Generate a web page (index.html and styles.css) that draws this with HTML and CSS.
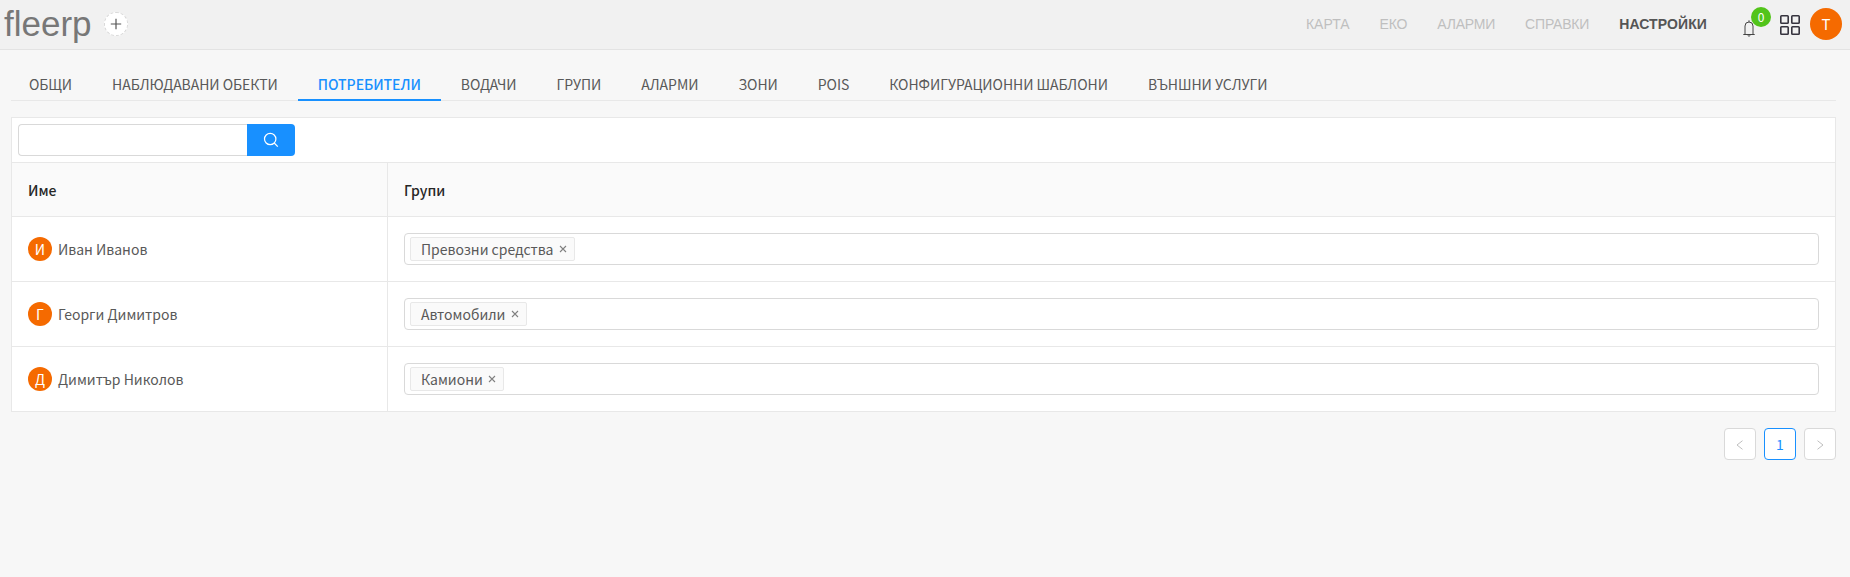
FILE: index.html
```html
<!DOCTYPE html>
<html lang="bg">
<head>
<meta charset="utf-8">
<title>fleerp</title>
<link rel="stylesheet" href="styles.css">
</head>
<body>
<header class="header">
  <div class="logo">fleerp</div>
  <button class="add" aria-label="+"><svg width="12" height="12" viewBox="0 0 12 12"><path d="M6 .8v10.400M.8 6h10.400" stroke="#555" stroke-width="1.200"/></svg></button>
  <nav class="nav">
    <a>КАРТА</a><a class="tight">ЕКО</a><a class="tight">АЛАРМИ</a><a class="tight">СПРАВКИ</a><a class="current">НАСТРОЙКИ</a>
  </nav>
  <div class="bell">
    <svg width="12" height="17" viewBox="0 0 12 17" fill="none" stroke="#444"><path d="M.3 14.500h11.400M2 14.500V6a4 4 0 0 1 8 0v8.500M6 .3V2M4.700 15.500q1.300 1.400 2.600 0"/></svg>
    <span class="badge">0</span>
  </div>
  <svg class="apps" width="20" height="20" viewBox="0 0 20 20" fill="none" stroke="#36343f" stroke-width="1.600"><rect x=".8" y=".8" width="7.400" height="7.400" rx=".8"/><rect x="11.800" y=".8" width="7.400" height="7.400" rx=".8"/><rect x=".8" y="11.800" width="7.400" height="7.400" rx=".8"/><rect x="11.800" y="11.800" width="7.400" height="7.400" rx=".8"/></svg>
  <div class="avatar large">T</div>
</header>
<main class="content">
  <div class="tabs">
    <a class="tab">ОБЩИ</a><a class="tab">НАБЛЮДАВАНИ ОБЕКТИ</a><a class="tab active">ПОТРЕБИТЕЛИ</a><a class="tab">ВОДАЧИ</a><a class="tab">ГРУПИ</a><a class="tab">АЛАРМИ</a><a class="tab">ЗОНИ</a><a class="tab">POIS</a><a class="tab">КОНФИГУРАЦИОННИ ШАБЛОНИ</a><a class="tab">ВЪНШНИ УСЛУГИ</a>
  </div>
  <section class="card">
    <div class="search">
      <input class="search-input" type="text">
      <button class="search-button" aria-label="search"><svg width="16" height="16" viewBox="0 0 16 16" fill="none" stroke="#fff" stroke-width="1.200"><circle cx="7.200" cy="7" r="5.700"/><path d="M11.200 11l3.600 3.700"/></svg></button>
    </div>
    <div class="row head"><div class="cell">Име</div><div class="cell">Групи</div></div>
    <div class="row"><div class="cell"><span class="avatar">И</span>Иван Иванов</div><div class="cell"><div class="select"><span class="tag">Превозни средства<svg class="close" viewBox="0 0 8 8"><path d="M1 1l6 6M7 1L1 7"/></svg></span></div></div></div>
    <div class="row"><div class="cell"><span class="avatar">Г</span>Георги Димитров</div><div class="cell"><div class="select"><span class="tag">Автомобили<svg class="close" viewBox="0 0 8 8"><path d="M1 1l6 6M7 1L1 7"/></svg></span></div></div></div>
    <div class="row"><div class="cell"><span class="avatar">Д</span>Димитър Николов</div><div class="cell"><div class="select"><span class="tag">Камиони<svg class="close" viewBox="0 0 8 8"><path d="M1 1l6 6M7 1L1 7"/></svg></span></div></div></div>
  </section>
  <div class="pagination">
    <a class="page"><svg width="8" height="10" viewBox="0 0 8 10"><path d="M6.500.7L1 5l5.500 4.300"/></svg></a>
    <a class="page selected">1</a>
    <a class="page"><svg width="8" height="10" viewBox="0 0 8 10"><path d="M1.500.7L7 5 1.500 9.300"/></svg></a>
  </div>
</main>
</body>
</html>
```
FILE: styles.css
```css
* { box-sizing: border-box; }
body {
  margin: 0;
  min-height: 577px;
  background: #f7f7f7;
  color: #595959;
  font: 14px/24px "Noto Sans CJK SC", "Noto Sans", sans-serif;
}
button { padding: 0; border: 0; }
.header {
  display: flex;
  height: 50px;
  padding-right: 8px;
  background: #f1f1f1;
  border-bottom: 1px solid #e3e3e3;
  font-family: "Liberation Sans", Arial, sans-serif;
}
.logo { width: 104px; padding-left: 4px; font-size: 35px; line-height: 48px; color: #777; }
.add {
  display: flex;
  align-items: center;
  justify-content: center;
  width: 24px;
  height: 24px;
  margin-top: 12px;
  background: #fff;
  border: 1px dashed #d9d9d9;
  border-radius: 50%;
}
.nav { display: flex; gap: 30px; margin-left: auto; font-size: 14px; line-height: 48px; color: #bfbfbf; }
.tight { letter-spacing: -.2px; }
.current { color: #555; font-weight: bold; letter-spacing: .1px; }
.bell { position: relative; width: 12px; height: 17px; margin: 20px 25px 0 36px; line-height: 0; }
.badge {
  position: absolute;
  left: 8px;
  top: -13px;
  width: 20px;
  height: 20px;
  border-radius: 10px;
  background: #52c41a;
  color: #fff;
  font: 12px/20px "Noto Sans CJK SC", sans-serif;
  text-align: center;
}
.apps { margin: 15px 10px 0 0; }
.avatar {
  flex: none;
  width: 24px;
  height: 24px;
  margin-right: 6px;
  border-radius: 50%;
  background: #f56a00;
  color: #fff;
  line-height: 24px;
  text-align: center;
}
.avatar.large { width: 32px; height: 32px; margin: 8px 0 0; line-height: 32px; font-size: 15px; font-family: "Noto Sans CJK SC", sans-serif; }
.content { padding: 19px 14px 0 11px; }
.tabs { display: flex; height: 32px; margin-bottom: 16px; border-bottom: 1px solid #e8e8e8; }
.tab { height: 32px; padding: 3px 20px 0; white-space: nowrap; letter-spacing: -.05px; }
.tab:first-child { padding-left: 18px; }
.active { color: #1890ff; font-weight: 500; border-bottom: 2px solid #1890ff; }
.card { background: #fff; border: 1px solid #e8e8e8; border-bottom: 0; }
.search { display: flex; height: 45px; padding: 6px; border-bottom: 1px solid #e8e8e8; }
.search-input { width: 229px; height: 32px; border: 1px solid #d9d9d9; border-right: 0; border-radius: 4px 0 0 4px; background: #fff; }
.search-button { display: flex; align-items: center; justify-content: center; width: 48px; height: 32px; background: #1890ff; border-radius: 0 4px 4px 0; }
.row { display: grid; grid-template-columns: 376px 1fr; height: 65px; border-bottom: 1px solid #e8e8e8; }
.cell { display: flex; align-items: center; padding: 0 16px; }
.cell:first-child { border-right: 1px solid #e8e8e8; }
.head { height: 54px; background: #fafafa; color: #262626; font-weight: 500; }
.select { display: flex; width: 100%; height: 32px; padding: 3px 5px; border: 1px solid #d9d9d9; border-radius: 4px; }
.tag { display: flex; align-items: center; height: 24px; padding: 0 7px 0 10px; background: #fafafa; border: 1px solid #e8e8e8; border-radius: 2px; }
.close { width: 8px; height: 8px; margin-left: 5.400px; fill: none; stroke: #808080; stroke-width: 1.100; }
.pagination { display: flex; justify-content: flex-end; gap: 8px; margin-top: 16px; }
.page { display: flex; align-items: center; justify-content: center; width: 32px; height: 32px; background: #fff; border: 1px solid #d9d9d9; border-radius: 4px; fill: none; stroke: #bfbfbf; }
.page svg { margin-top: 2px; }
.selected { border-color: #1890ff; color: #1890ff; }
```
